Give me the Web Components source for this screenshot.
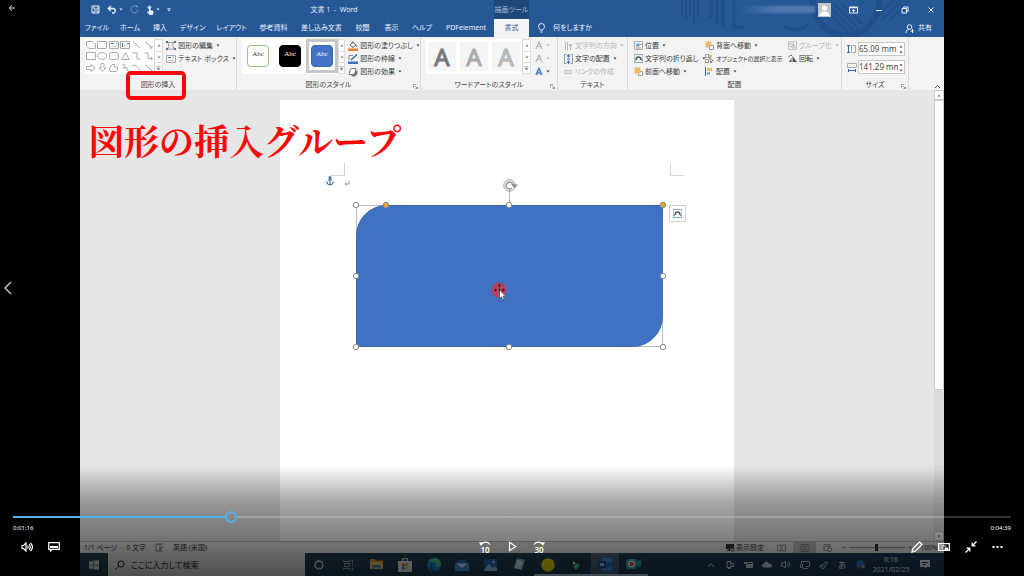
<!DOCTYPE html>
<html lang="ja">
<head>
<meta charset="utf-8">
<title>Video player</title>
<style>
html,body{margin:0;height:100%;background:#000}
body{font:7px/10px "Noto Sans","Noto Sans CJK JP",sans-serif;font-feature-settings:"palt";color:#333;overflow:hidden}
</style>
</head>
<body>
<video-player></video-player>
<script>
const RESET = `*{box-sizing:border-box}
button,input{font:inherit;color:inherit;font-feature-settings:inherit;background:none;border:0;padding:0;margin:0;outline:0}
button{display:inline-flex;align-items:center;justify-content:center;white-space:nowrap}
a{color:inherit;text-decoration:none}`;

function define(name, markup, css) {
  customElements.define(name, class extends HTMLElement {
    constructor() {
      super();
      this.attachShadow({ mode: 'open' }).innerHTML =
        `<style>${RESET}${css}</style>` + (typeof markup === 'function' ? markup(this) : markup);
    }
  });
}

/* Icons: name -> [width, height, drawing] */
const S = 'fill="none" stroke="currentColor"';
const ICONS = {
  back: [8, 8, `<path ${S} d="M7 4H1.2M4 1.3 1.2 4 4 6.7"/>`],
  save: [9, 9, `<path ${S} d="M1 1h7v7H1zM3 1v3h4V1M3 8V6h4v2"/>`],
  undo: [10, 9, `<path ${S} stroke-width="1.3" d="M4 1 1.2 3.5 4 6M1.5 3.5H6a2.2 2.2 0 0 1 0 4.5H5"/>`],
  redo: [9, 9, `<path ${S} opacity=".4" d="M6.5 1.5A3.5 3.5 0 1 0 8 4.500M6.500 0v2h2"/>`],
  touch: [8, 10, `<circle cx="3.500" cy="2.300" r="1.900" fill="currentColor" opacity=".75"/><path fill="currentColor" d="M3 2h1.400v3l3 1v2L6.500 10h-3L1 7l.600-.900L3 7z"/>`],
  caret: [4, 3, `<path fill="currentColor" d="M.5.500h3L2 2.500z"/>`],
  qat: [4, 4, `<path fill="currentColor" d="M.5 0h3v.800h-3zM.500 1.500h3L2 3.500z"/>`],
  avatar: [13, 14, `<path fill="#c4c4c4" d="M0 0h13v14H0z"/><circle cx="6.500" cy="5" r="2.600" fill="#fff"/><path fill="#fff" d="M1.500 13c0-6 10-6 10 0z"/>`],
  ribbonopt: [9, 8, `<path ${S} d="M.5 1h8v6h-8z"/><path fill="currentColor" d="M.5 1h8v1.300h-8zM4.500 3l2 2H5v1.500H4V5H2.500z"/>`],
  min: [8, 8, `<path ${S} d="M1 4.500h6"/>`],
  restore: [8, 8, `<path ${S} d="M1 2.500h4.500V7H1zM2.500 2.500V1H7v4.500H5.500"/>`],
  close: [8, 8, `<path ${S} d="m1.500 1.500 5 5m0-5-5 5"/>`],
  bulb: [9, 10, `<path ${S} d="M3.200 7c0-1-1.700-1.600-1.700-3.500a3 3 0 0 1 6 0C7.500 5.400 5.800 6 5.800 7zM3.300 9h2.400"/>`],
  share: [9, 9, `<circle ${S} cx="4.500" cy="3" r="2.300"/><path ${S} d="M1 9c0-2.600 1.200-3.600 3-3.700M7.500 5v4M5.500 7h3"/>`],
  snip: [10, 8, `<path ${S} d="M.5.500h6.500l2.500 2.500v4.500H3L.500 5z"/>`],
  box: [10, 8, `<path ${S} d="M.5.500h9v7h-9z"/>`],
  ellipse: [10, 8, `<ellipse ${S} cx="5" cy="4" rx="4.300" ry="3.300"/>`],
  rbox: [10, 8, `<rect ${S} x=".5" y=".5" width="9" height="7" rx="2"/>`],
  tbox: [10, 8, `<path ${S} color="#aaa" d="M.5.500h9v7h-9z"/><path stroke="#3b75b5" d="M2 2.500h3M7 2.500h1"/><path ${S} color="#aaa" opacity=".6" d="M2 5.500h6"/>`],
  vbox: [10, 8, `<path ${S} d="M.5.500h9v7h-9z"/><path stroke="#3b75b5" d="M2.500 2v4M7 2.500h2"/><path ${S} opacity=".6" d="M5 2v4"/>`],
  line: [9, 8, `<path ${S} d="m1 .5 7 6.500"/>`],
  arrowline: [9, 8, `<path ${S} d="m1 .5 7 6.500M8 4.500V7H5.500"/>`],
  tri: [9, 8, `<path ${S} d="M4.500.700 8.300 7.500H.700z"/>`],
  elbow: [9, 8, `<path ${S} d="M.5 1H5v6h3.500"/>`],
  elbow2: [9, 8, `<path ${S} d="M.5 1H4v5.500h4.500M7 5l1.500 1.500L7 8"/>`],
  rarrow: [10, 8, `<path ${S} d="M.5 2.500H5v-2L9 4 5 7.500v-2H.500z"/>`],
  darrow: [9, 9, `<path ${S} d="M3 .5h3v4.500h2L4.500 8.500 1 5h2z"/>`],
  free: [9, 9, `<path ${S} d="M3 1.500h3L5 4h3.500v3L7 8.500H1L.500 5z"/>`],
  scribble: [9, 9, `<path ${S} d="M2 3c0-3 3-2 2 0S1 5.500 3 5s4-1 3 0-1 1 0 1-.500 2 2 2.500"/>`],
  curve: [9, 8, `<path ${S} d="M.5 1.500c4-1 6.500 2 7.500 5.500"/>`],
  up: [4, 3, `<path fill="currentColor" d="M.5 2.500h3L2 .500z"/>`],
  more: [5, 5, `<path fill="currentColor" d="M.5.500h4v.800h-4zM.700 2.200h3.600L2.500 4.500z"/>`],
  edit: [10, 9, `<path ${S} color="#999" d="M2 1.500h6L6.500 4l2 4h-7l1.500-3z"/><path fill="#3b75b5" d="M0 0h2v2H0zM8 0h2v2H8zM0 7h2v2H0zM8 7h2v2H8z"/>`],
  fill: [10, 10, `<path ${S} color="#666" d="M2 4 5 1l3 3-3 2.500zM5 2.500V.500"/><path fill="#3b75b5" d="M8 3.500 9.500 6H8z"/><path fill="#ed7d31" d="M0 7.500h10V10H0z"/>`],
  outline: [10, 10, `<path ${S} color="#888" d="M1 6V1.500h4"/><path stroke="#2f6cb3" stroke-width="1.500" d="m3 6 6-5.500"/><path fill="#3a6fc4" d="M0 7.500h10V10H0z"/>`],
  effect: [10, 10, `<path fill="#777" d="m3 7.500 4-4.500 2.500 1v3L7 9.500H4z"/><path fill="#fff" stroke="#777" d="M3 1.500h5l-1 4-2 2H1L2 3z"/>`],
  launch: [5, 5, `<path ${S} stroke-width=".7" d="M.5 3.500v-3h3M2 2l2.500 2.500M4.500 2.500v2h-2"/>`],
  afill: [8, 9, `<path ${S} stroke-width="1.200" d="m1 8 3-7 3 7M2 5.500h4"/>`],
  aglow: [8, 9, `<path fill="none" stroke="#a9c9ec" stroke-width="3" d="m1.500 8 2.500-6 2.500 6"/><path fill="none" stroke="#2f6cb3" d="m1 8 3-6.500L7 8M2 6h4"/>`],
  dir: [9, 10, `<path ${S} d="M1.500 1v8M3.500 1v8M6.500 9V3L5 5M6.500 3 8 5"/>`],
  valign: [9, 10, `<path ${S} color="#999" d="M2.500.500h-2v9h2M6.500.500h2v9h-2"/><path fill="#2f6cb3" d="m4.500 0 2 2.500H5v1H4v-1H2.500zM4.500 10l2-2.500H5v-1H4v1H2.500zM3 4.500h3v1H3z"/>`],
  link: [8, 6, `<path ${S} d="M3.500 1.500h-2a1.500 1.500 0 0 0 0 3h2M4.500 1.500h2a1.500 1.500 0 0 1 0 3h-2M2.500 3h3"/>`],
  pos: [9, 9, `<path ${S} color="#aaa" d="M.5.500h8v8h-8z"/><path fill="#5b9bd5" d="M2.500 2.500h3v3h-3z"/><path stroke="#999" d="M6 3.500h2M2 7h5"/>`],
  wrap: [9, 9, `<path stroke="#7fb0dc" d="M0 .500h9M0 8.500h9M0 6.500h2M7 6.500h2"/><path ${S} color="#555" stroke-width="1.500" d="M2 6c0-4 5-4 5 0"/><path ${S} color="#999" stroke-width=".5" d="M.5 0v9M8.500 0v9"/>`],
  front: [9, 9, `<path fill="#fff" stroke="#999" d="M4.500 4.500h4v4h-4z"/><path fill="#efb866" d="M.500.500h6v6h-6z"/>`],
  behind: [9, 9, `<path fill="#efb866" d="M.5.500h6v6h-6z"/><path fill="#fff" stroke="#999" d="M4.500 4.500h4v4h-4z"/>`],
  select: [9, 9, `<path fill="#fff" stroke="#999" d="M.5.500h3v3h-3zM.500 5.500h3v3h-3z"/><path fill="#efb866" d="M4 1h3v2H4z"/><path fill="#fff" stroke="#666" stroke-width=".8" d="m4.500 3 4 4H6.500L6 9z"/>`],
  align: [8, 9, `<path stroke="#2f6cb3" d="M.5 0v9"/><path fill="#efb866" d="M2 1h5v3H2z"/><path fill="#5b9bd5" d="M2 5.500h3v2H2z"/>`],
  group: [9, 9, `<path ${S} stroke-width=".8" d="M.5.500h8v8h-8zM2 2h3.500v3.500H2zM4 4h3v3H4z"/>`],
  rotate: [9, 9, `<path fill="#555" d="M4.500 2v6H9zM3.500 4v4H1z"/><path fill="none" stroke="#2f6cb3" d="M1 3.500C1 1.500 2.500 1 4 1.500"/>`],
  hsize: [10, 10, `<path stroke="#2f6cb3" d="M1.500 1v8M0 1.500h3M0 8.500h3"/><path ${S} color="#aaa" d="M4.500 1.500h4v7h-4z"/>`],
  wsize: [10, 10, `<path stroke="#2f6cb3" d="M1 8.500h8M1.500 7v3M8.500 7v3"/><path ${S} color="#aaa" d="M.5 1.500h9v4h-9z"/>`],
  collapse: [7, 5, `<path ${S} d="m1 4 2.500-2.500L6 4"/>`],
  anchor: [8, 10, `<g fill="none" stroke="#41719c" stroke-width="1.200"><circle cx="4" cy="1.600" r="1"/><path d="M4 2.600V9M2 4h4M.700 5.500C1 8 2.500 8.800 4 9c1.500-.200 3-1 3.300-3.500"/></g>`],
  ret: [6, 5, `<path ${S} stroke-width=".8" d="M5 0v3H1M2.500 1.500 1 3l1.500 1.500"/>`],
  proof: [9, 9, `<path ${S} stroke-width=".8" color="#666" d="M1 1h4v7H1zM5 1h3M5 8h3"/><path ${S} color="#555" d="m4.500 5 1 1.500L8 3"/>`],
  display: [9, 9, `<path fill="currentColor" d="M0 1h8v4.500H4V8H1V7h1.500V6H0z"/><circle ${S} cx="6.500" cy="6.500" r="1.700"/>`],
  read: [9, 8, `<path ${S} stroke-width=".8" d="M.5 1h3.500v6H.500zM5 1h3.500v6H5z"/>`],
  print: [9, 8, `<path ${S} stroke-width=".8" d="M1 .500h7v7H1zM2.500 2.500h4M2.500 4h4M2.500 5.500h4"/>`],
  web: [9, 8, `<path ${S} stroke-width=".8" d="M1 .500h6v3M1 .500v6h3M2 2.500h4"/><circle ${S} cx="6.500" cy="5.500" r="2"/>`],
  win: [10, 10, `<path fill="#c9d3d6" d="m0 1.500 4.500-.700v4H0zM5 .700 10 0v4.800H5zM0 5.300h4.500v4L0 8.600zM5 5.300h5V10L5 9.300z"/>`],
  search: [10, 10, `<circle ${S} cx="6" cy="4" r="3"/><path ${S} d="M4 6.200.500 9.500"/>`],
  cortana: [10, 10, `<circle fill="none" stroke="#d6dadd" stroke-width="1.300" cx="5" cy="5" r="4"/>`],
  taskview: [12, 10, `<path fill="none" stroke="#a0a6aa" d="M2.500 3.500h5v3h-5zM1.500 0v1.500h7V0M1.500 10V8.500h7V10M10.500 0v3M10.500 4v2M10.500 7.500V10"/>`],
  folder: [13, 11, `<path fill="#d49a2a" d="M0 0h5l1 1.500h7V10H0z"/><path fill="#f5c453" d="M0 3h13v7H0z"/><path fill="#2f86d4" d="M2.500 6h8v5H9V8.500H4V11H2.500z"/>`],
  store: [14, 14, `<path fill="none" stroke="#e9e9e9" d="M4.500 3V.700h5V3"/><path fill="#e9e9e9" d="M0 3h14v11H0z"/><path fill="#e05030" d="M4 5.500h2.700v2.700H4z"/><path fill="#8cc63f" d="M7.300 5.500H10v2.700H7.300z"/><path fill="#2f9de0" d="M4 8.800h2.700v2.700H4z"/><path fill="#f5c040" d="M7.300 8.800H10v2.700H7.300z"/>`],
  edge: [14, 14, `<circle cx="7" cy="7" r="7" fill="#1f7fd0"/><path fill="#4cc88a" d="M1 4c3-6 13-5 13 2.500 0 3-5 3-5.500 1C9 3 3 3 1 4z"/><path fill="#124f96" d="M5 6c-2 4 2 8 7 5.500-2 2-4 2.500-5 2.500C2 13 2 8 5 6z"/>`],
  mail: [14, 12, `<path fill="#1c6fc0" d="m0 4 7-4 7 4v8H0z"/><path fill="#dfeefa" d="M1 4.500h12L7 9z"/><path fill="#37a0e8" d="m0 4.500 7 5 7-5V12H0z"/>`],
  photos: [13, 12, `<path fill="#2067b0" d="M0 0h13v12H0z"/><path fill="#8fc8f2" d="m0 11 5-6 4 4 2-2 2 3v2H0z"/><circle cx="9.500" cy="3" r="1.200" fill="#cfe8fb"/>`],
  notepad: [13, 13, `<path fill="#6fb4cb" d="m4 0 8 2-3 10-8-2z"/><path fill="#d6e6ea" d="m4 2 6 1.500-2.500 8L1.500 10z"/>`],
  yellow: [14, 14, `<circle cx="7" cy="7" r="6.700" fill="#e6dc00"/>`],
  filmora: [14, 14, `<rect width="14" height="14" rx="2" fill="#23363a"/><path fill="#e8f4f2" d="m4 3 3 2-3 2z"/><path fill="#44c9b0" d="m4 9 4-4 3 3-4 4z"/>`],
  word: [14, 13, `<path fill="#3d8be0" d="M4 0h10v13H4z"/><path fill="#2a66bd" d="M4 4.500h10V9H4z"/><path fill="#1a4a9c" d="M0 3h8v7H0z"/><path fill="none" stroke="#fff" stroke-width=".8" d="m2 5 .8 3L4 5.500 5.200 8 6 5"/>`],
  camera: [15, 12, `<path fill="#2fa6b5" d="M0 2 2 0h8l1 2 4-1v7l-4-1-1 3H0z"/><circle cx="5.500" cy="5" r="3.500" fill="#fff"/><circle cx="5.500" cy="5" r="2.200" fill="#e04040"/>`],
  chev: [8, 6, `<path ${S} d="m1 5 3-3.500L7 5"/>`],
  meet: [8, 9, `<path ${S} d="M1 1.500h4v6H1zM5 3.500h2.500v3H5M2 8.500h3"/>`],
  battery: [10, 8, `<path ${S} d="M2.500 1.500h6v5h-6z"/><path fill="currentColor" d="M3 3h5v3H3zM0 1h3v2H0z"/>`],
  cloud: [10, 7, `<path fill="currentColor" d="M2 6.500a2 2 0 0 1 0-4C3 0 6 0 7 2.500c3-.500 4 3.500 1.500 4z"/>`],
  vol: [10, 9, `<path ${S} d="M.5 3h2l2-2v7l-2-2h-2zM6 3c.800 1 .800 2 0 3M7.500 1.500c2 2 2 4 0 6"/>`],
  net: [10, 9, `<path ${S} d="M1.500 4V1.500h8v5H6M3 8.500h5M.500 4.500h2v3h-2z"/>`],
  pen: [9, 9, `<path ${S} d="M1 8 7 1.500 8.500 3 4 7.500c-2 2 1 1.500 3-1M1.500 7.500C-.5 5 3 4.500 4 5.500"/>`],
  ball: [9, 9, `<circle cx="4.500" cy="4.500" r="4.200" fill="#2a74c8"/><circle cx="7" cy="6.500" r="1.700" fill="#e98a50"/>`],
  note: [10, 9, `<path fill="currentColor" d="M0 0h10v7H7L5 9V7H0z"/><path stroke="#2a3c46" d="M2 2.500h6M2 4.500h4"/>`],
  speaker: [12, 10, `<path ${S} stroke-width="1.200" d="M1 3.500h1.500L5 1v8L2.500 6.500H1zM6.500 3.500c.800 1 .800 2 0 3M8 2.200c1.700 1.700 1.700 4 0 5.600M9.500 1c2.500 2.500 2.500 5.500 0 8"/>`],
  sub: [12, 10, `<path ${S} stroke-width="1.200" d="M.7.700h10.600v6.600H4L2.500 9V7.300H.700z"/><path fill="currentColor" d="M2 4h8v2H2z"/>`],
  play: [9, 11, `<path ${S} stroke-width="1.200" d="M1.500 1.300 7.800 5.500 1.500 9.700z"/>`],
  pencil: [12, 12, `<path ${S} stroke-width="1.300" d="m1 11 1-3.500L8.500 1 11 3.500 4.500 10z"/>`],
  cc: [12, 8, `<path ${S} stroke-width="1.300" d="M.7.700h10.600v6.600H.700z"/><path ${S} d="M2.500 3h6M2.500 5h2.500"/><path fill="currentColor" d="M6.500 4.500H10v2.500H6.500z"/>`],
  shrink: [12, 12, `<path ${S} stroke-width="1.200" d="m11.500.500-4 4M7.200 1.500v3.300h3.300M.500 11.500l4-4M4.800 10.500V7.200H1.500"/>`],
  dots: [11, 4, `<path fill="currentColor" d="M.5 1h2v2h-2zM4.500 1h2v2h-2zM8.500 1h2v2h-2z"/>`],
  arc10: [12, 5, `<path ${S} stroke-width="1.300" d="M2 3.500c1.500-3 7-3.500 9 0"/><path fill="currentColor" d="M0 1 4.500 2 2 5z"/>`],
  arc30: [12, 5, `<path ${S} stroke-width="1.300" d="M1 3.500c2-3.500 7.500-3 9 0"/><path fill="currentColor" d="M12 1 7.500 2 10 5z"/>`]
};
define('ui-icon', el => {
  const [w, h, d] = ICONS[el.getAttribute('name')];
  return `<svg width="${w}" height="${h}" viewBox="0 0 ${w} ${h}" aria-hidden="true">${d}</svg>`;
}, `:host{display:inline-flex;flex:none;justify-content:center;align-items:center}svg{display:block}`);
const ic = n => `<ui-icon name="${n}"></ui-icon>`;

/* Title bar */
define('word-titlebar', `
<div class="left"><nav>
  <button aria-label="上書き保存">${ic('save')}</button>
  <button aria-label="元に戻す">${ic('undo')}${ic('caret')}</button>
  <button aria-label="やり直し">${ic('redo')}</button>
  <button aria-label="タッチ">${ic('touch')}${ic('caret')}</button>
  <button aria-label="カスタマイズ">${ic('qat')}</button></nav>
  <span class="title">文書 1  -  Word</span></div>
<span class="context">描画ツール</span>
<div class="right"><i class="name"></i>${ic('avatar')}
  <div class="win"><button aria-label="リボンの表示オプション">${ic('ribbonopt')}</button><button aria-label="最小化">${ic('min')}</button><button aria-label="元のサイズ">${ic('restore')}</button><button aria-label="閉じる">${ic('close')}</button></div>
</div>`, `
:host{display:grid;grid-template-columns:414px 35px 1fr;height:19px;color:#e6edf6}
.left,.right{display:flex;align-items:center}
nav{display:flex;width:94px;padding-left:11px;gap:7px}
nav button{gap:2px}
.title{flex:1;text-align:center;white-space:pre}
.context{background:#1e4878;color:#a9bcd6;display:grid;place-items:center;white-space:nowrap}
.right{justify-content:flex-end}
.name{width:76px;height:7px;margin-right:3px;background:linear-gradient(90deg,#5279ae00,#5279ae 50%);filter:blur(1px)}
.win{display:flex;margin-left:9px}.win button{width:26px;height:18px}`);

/* Tab strip */
const TABS = ['ファイル', 'ホーム', '挿入', 'デザイン', 'レイアウト', '参考資料', '差し込み文書', '校閲', '表示', 'ヘルプ', 'PDFelement', '書式'];
define('word-tabs', `
<div class="tabs">${TABS.map(t => `<button${t === '書式' ? ' class="on"' : ''}>${t}</button>`).join('')}</div>
<button class="tell">${ic('bulb')}何をしますか</button>
<button class="share">${ic('share')}共有</button>`, `
:host{display:flex;height:18px;color:#eef3f9}
.tabs{display:grid;grid-template-columns:34px 32px 28px 37px 41px 43px 53px 29px 29px 32px 56px 35px}
.on{background:#f3f3f3;color:#2b579a}
.tell{margin-left:8px;gap:7px}
.share{margin-left:auto;margin-right:12px;gap:4px}`);

/* Ribbon parts */
define('ribbon-item', el => `<button${el.hasAttribute('off') ? ' disabled' : ''}>${ic(el.getAttribute('icon'))}<slot></slot>${el.hasAttribute('menu') ? ic('caret') : ''}</button>`, `
:host{display:flex;height:13px;color:#3a3a3a}
:host([off]){color:#b4b4b4}
:host([long]){font-size:6px}
button{gap:3px}ui-icon:first-child{width:10px;margin-right:-1px}`);
define('gallery-scroll', `<button aria-label="上へ">${ic('up')}</button><button aria-label="下へ">${ic('caret')}</button><button aria-label="その他">${ic('more')}</button>`, `
:host{display:grid;grid-template-rows:repeat(3,1fr);width:9px;color:#777;background:#fff;border:1px solid #ddd}
button+button{border-top:1px solid #ddd}`);
define('ribbon-group', el => `<div class="body"><slot></slot></div><footer>${el.getAttribute('label')}</footer>${el.hasAttribute('launcher') ? `<button aria-label="詳細">${ic('launch')}</button>` : ''}`, `
:host{display:flex;flex-direction:column;position:relative;padding:2px 0 0 5px;border-right:1px solid #d8d8d8;color:#444}
.body{display:flex;height:41px}
footer{text-align:center;height:10px;line-height:10px;margin-left:-5px}
button{position:absolute;right:2px;bottom:1px;color:#777}`);
define('size-field', el => `<label>${ic(el.getAttribute('icon'))}<span class="f"><input aria-label="${el.getAttribute('label')}" value="${el.getAttribute('value')}"><span class="s">${ic('up')}${ic('caret')}</span></span></label>`, `
:host{display:block}
label{display:flex;align-items:center;gap:1px}
.f{display:flex;width:47px;height:14px;background:#fff;border:1px solid #c6c6c6}
input{flex:1;min-width:0;font-size:8px;color:#444}
.s{display:flex;flex-direction:column;justify-content:space-around;width:6px}`);

const SHAPES = ['snip','box','tbox','vbox','line','arrowline','box','ellipse','rbox','tri','elbow','elbow2','rarrow','darrow','free','scribble','curve','line'];
define('word-ribbon', `
<ribbon-group label="図形の挿入">
  <div class="gal shapes">${SHAPES.map(ic).join('')}</div><gallery-scroll></gallery-scroll>
  <div class="col"><ribbon-item icon="edit" menu>図形の編集</ribbon-item><ribbon-item icon="tbox" menu>テキスト ボックス</ribbon-item></div>
</ribbon-group>
<ribbon-group label="図形のスタイル" launcher>
  <div class="gal"><button class="st"><b>Abc</b></button><button class="st k"><b>Abc</b></button><button class="st bl"><b>Abc</b></button></div><gallery-scroll></gallery-scroll>
  <div class="col"><ribbon-item icon="fill" menu>図形の塗りつぶし</ribbon-item><ribbon-item icon="outline" menu>図形の枠線</ribbon-item><ribbon-item icon="effect" menu>図形の効果</ribbon-item></div>
</ribbon-group>
<ribbon-group label="ワードアートのスタイル" launcher>
  <div class="gal"><button class="wa">A</button><button class="wa w2">A</button><button class="wa w3">A</button></div><gallery-scroll></gallery-scroll>
  <div class="col"><ribbon-item icon="afill" off menu></ribbon-item><ribbon-item icon="afill" off menu></ribbon-item><ribbon-item icon="aglow" menu></ribbon-item></div>
</ribbon-group>
<ribbon-group label="テキスト">
  <div class="col"><ribbon-item icon="dir" off menu>文字列の方向</ribbon-item><ribbon-item icon="valign" menu>文字の配置</ribbon-item><ribbon-item icon="link" off>リンクの作成</ribbon-item></div>
</ribbon-group>
<ribbon-group label="配置">
  <div class="col a"><ribbon-item icon="pos" menu>位置</ribbon-item><ribbon-item icon="wrap" menu>文字列の折り返し</ribbon-item><ribbon-item icon="front" menu>前面へ移動</ribbon-item></div>
  <div class="col b"><ribbon-item icon="behind" menu>背面へ移動</ribbon-item><ribbon-item icon="select" long>オブジェクトの選択と表示</ribbon-item><ribbon-item icon="align" menu>配置</ribbon-item></div>
  <div class="col"><ribbon-item icon="group" off menu>グループ化</ribbon-item><ribbon-item icon="rotate" menu>回転</ribbon-item></div>
</ribbon-group>
<ribbon-group label="サイズ" launcher>
  <div class="sizes"><size-field icon="hsize" label="高さ" value="65.09 mm"></size-field><size-field icon="wsize" label="幅" value="141.29 mm"></size-field></div>
</ribbon-group>
<button class="fold" aria-label="リボンを折りたたむ">${ic('collapse')}</button>`, `
:host{display:grid;grid-template-columns:157px 184px 137px 70px 214px 67px 1fr;height:53px;background:#f3f3f3;overflow:hidden}
.gal{display:flex;background:#fff;height:35px}
gallery-scroll{height:35px}
.shapes{display:grid;grid-template-columns:repeat(6,1fr);width:70px;place-items:center;color:#aaa}
gallery-scroll + .col{padding-left:3px}
.col.a{width:71px}.col.b{width:83px}
.st{width:32px;height:34px;border:3px solid transparent}
b{display:grid;place-items:center;width:22px;height:22px;border:1px solid #92c47a;border-radius:4px;font:7px "Liberation Serif",serif;padding-bottom:4px;color:#333}
.k b{background:#000;border-color:#000;color:#fff}
.bl{border-color:#c6c6c6}.bl b{background:#4472c4;border-color:#3a66b0;color:#fff}
.wa{width:28px;height:29px;margin:3px 2px;background:#f5f5f8;font:24px "Noto Sans",sans-serif;color:#777;-webkit-text-stroke:1px #777}
.w2{color:#aaa;-webkit-text-stroke:1px #aaa}.w3{color:#ccc;-webkit-text-stroke:1px #aaa}
.sizes{display:flex;flex-direction:column;gap:4px;padding-top:3px}
.fold{justify-self:end;align-self:end;width:14px;height:8px;color:#555}`);

/* Document page with the selected drawing */
const knob = (x, y, c = '#fff') => `<circle cx="${x}" cy="${y}" r="2.700" fill="${c}" stroke="#8a8a8a"/>`;
define('doc-canvas', `
<main><article>
<svg width="454" height="260" viewBox="0 0 454 260" aria-label="図形">
  <path fill="none" stroke="#d4d4d4" d="M64.500 63v12.500H51M390.500 63v12.500H404"/>
  <path fill="none" stroke="#bbb" d="M76.500 105.500h306v141h-306zM229.500 90v15"/>
  <path fill="#4172c1" stroke="#3c69b0" d="M106.500 105.500h276v111a30 30 0 0 1-30 30h-276v-111a30 30 0 0 1 30-30z"/>
  ${knob(76, 105)}${knob(229, 105)}${knob(76, 176)}${knob(383, 176)}${knob(76, 247)}${knob(229, 247)}${knob(383, 247)}${knob(106, 105, '#f0a030')}${knob(383, 105, '#f0a030')}
  <g fill="none" stroke="#999"><circle cx="229.500" cy="85.500" r="5.700"/><path stroke-width="1.500" d="M232 88a3.500 3.500 0 1 1 1-3"/><path fill="#888" stroke="none" d="M231 84.500h7l-3.500 3.500z"/></g>
  <circle cx="219" cy="190" r="7.500" fill="#b8415f"/>
  <path stroke="#2c2c40" stroke-dasharray="2 1" d="M219.500 185.500v9M215 190h9"/>
  <path fill="#1a1a2a" d="m219.500 184 1.500 2h-3zM214 190l2-1.500v3zM225 190l-2-1.500v3z"/>
  <path fill="#fff" stroke="#333" stroke-width=".6" d="M219.500 190v8.500l2-1.700 1.300 3 1.500-.6-1.300-3h2.700z"/>
</svg>
<ui-icon class="anchor" name="anchor"></ui-icon><ui-icon class="ret" name="ret"></ui-icon>
<button aria-label="レイアウト オプション">${ic('wrap')}</button>
</article></main>
<aside><button aria-label="上へスクロール">${ic('up')}</button><i></i><button aria-label="下へスクロール">${ic('caret')}</button></aside>`, `
:host{display:flex;flex:1;min-height:0;background:#e6e6e6}
main{flex:1;display:flex;justify-content:center;padding-top:10px}
article{position:relative;width:min(454px,90%);background:#fff}
svg{display:block}
.anchor,.ret,article button{position:absolute}
.anchor{left:46px;top:76px}.ret{left:64px;top:81px;color:#888}
article button{left:389px;top:105px;width:17px;height:17px;border:1px solid #d0d0d0;background:#fff}
aside{width:10px;display:flex;flex-direction:column;background:#dcdcdc;color:#666}
aside button{height:10px;background:#fff;border:1px solid #ccc}
aside i{height:290px;background:#fff;border:1px solid #ccc}
aside button:last-child{margin-top:auto}`);

/* Status bar */
define('word-status', `
<span>1/1 ページ</span><span>0 文字</span>${ic('proof')}<span>英語 (米国)</span>
<div class="r"><button class="disp">${ic('display')}表示設定</button>
<button class="v" aria-label="閲覧モード">${ic('read')}</button><button class="v on" aria-label="印刷レイアウト">${ic('print')}</button><button class="v" aria-label="Web レイアウト">${ic('web')}</button>
<span class="zoom">−<input type="range" aria-label="ズーム" value="50">+</span><span class="pct">100%</span></div>`, `
:host{display:flex;align-items:center;gap:9px;height:12px;padding:0 4px;background:#e8e8e8;color:#333;white-space:nowrap;border-top:1px solid #bbb}
.r{margin-left:auto;display:flex;align-items:center}
.disp{gap:1px;margin-right:6px}
.v{width:23px;height:11px;color:#777}.on{background:#bdbdbd}
.zoom{display:flex;align-items:center;gap:3px;margin-left:3px}
input{appearance:none;width:56px;height:9px;background:linear-gradient(#888,#888) center/100% 1px no-repeat}
input::-webkit-slider-thumb{appearance:none;width:3px;height:7px;background:#333}
.pct{margin-left:8px;width:20px}`);

/* Windows taskbar */
const APPS = ['cortana','taskview','folder','store','edge','mail','photos','notepad','yellow','filmora','word','camera'];
const TRAY = ['chev','meet','battery','cloud','vol','net','pen','','ball'];
define('task-bar', `
<button class="start" aria-label="スタート">${ic('win')}</button>
<label>${ic('search')}<span>ここに入力して検索</span></label>
<nav>${APPS.map((a, i) => `<button aria-label="${a}" class="${i > 7 ? 'run' : ''} ${a === 'word' ? 'on' : ''}">${ic(a)}</button>`).join('')}</nav>
<div class="tray">${TRAY.map(t => t ? `<i>${ic(t)}</i>` : '<i class="ime">あ</i>').join('')}</div>
<time><span>6:16</span><span>2021/02/25</span></time><button class="note" aria-label="通知">${ic('note')}</button>`, `
:host{display:flex;height:23px;background:linear-gradient(90deg,#22404b,#20385a)}
.start{width:28px}
label{width:197px;background:#e2e2e2;display:flex;align-items:center;gap:6px;padding-left:7px;color:#222;font-size:8px}
nav{display:flex;width:343px}nav button{flex:1;border:solid transparent;border-width:2px 0}
.run{border-bottom-color:#b4d6f2}.on{background:#4b6078}
.tray{display:flex;width:168px;margin-left:auto;color:#cdd5dc}
i{flex:1;display:grid;place-items:center;font-style:normal}.ime{font-size:8px;color:#fff}
time{width:42px;display:flex;flex-direction:column;justify-content:center;text-align:center;color:#e8eef4}
.note{width:32px;color:#e8eef4;padding-right:6px}`);

/* Whole recorded window */
define('word-window', `<header><svg class="art" width="230" height="37" viewBox="0 0 230 37" aria-hidden="true"><g fill="none" stroke="#214f8b" stroke-width="3">
<path stroke-width="2" d="M2 0v14M6 0v20M10 0v15M14 0v24M18 0v18"/><path stroke-width="4" d="M31 0v18M37 0v24M43 0v27"/><path d="M54 0v27h10"/>
<path d="M104 26c10 6 20 4 24-2"/><circle cx="166" cy="2" r="33" stroke-width="6"/><path stroke-width="2" d="m140 4 28 28M147 4l26 26M154 4l24 24M162 4l20 20"/><path stroke-width="2" d="m210 20 20-20M202 20l20-20M194 20 214 0"/></g></svg>
<word-titlebar></word-titlebar><word-tabs></word-tabs></header>
<word-ribbon></word-ribbon><doc-canvas></doc-canvas><word-status></word-status><task-bar></task-bar>`, `
:host{display:flex;flex-direction:column;min-width:0}
header{position:relative;background:#265898}
.art{position:absolute;right:34px;top:0}
word-titlebar,word-tabs{position:relative}`);

/* Transport controls */
define('player-controls', `
<input type="range" min="0" max="1000" value="215" aria-label="シーク">
<div class="times"><span>0:01:16</span><span>0:04:39</span></div>
<div class="bar">
 <div><button aria-label="音量">${ic('speaker')}</button><button aria-label="字幕">${ic('sub')}</button></div>
 <div><button class="skip">${ic('arc10')}<span>10</span></button><button aria-label="再生">${ic('play')}</button><button class="skip">${ic('arc30')}<span>30</span></button></div>
 <div class="end"><button aria-label="編集">${ic('pencil')}</button><button aria-label="ミニ表示">${ic('cc')}</button><button aria-label="全画面表示の終了">${ic('shrink')}</button><button aria-label="その他">${ic('dots')}</button></div>
</div>`, `
:host{display:block;padding:46px 13px 16px;color:#fff;background:linear-gradient(#0000,#00000059 34%,#000000a6)}
input{--at:21.8%;display:block;appearance:none;width:100%;height:12px;
 background:linear-gradient(90deg,#4fb3e6 calc(var(--at) - 5px),#0000 0,#0000 calc(var(--at) + 5px),#ffffff33 0) center/100% 2px no-repeat}
input::-webkit-slider-thumb{appearance:none;width:12px;height:12px;border:2px solid #4fb3e6;border-radius:50%;background:none}
.times{display:flex;justify-content:space-between;font-size:6px;line-height:10px}
.bar{display:grid;grid-template-columns:1fr auto 1fr;height:27px}
.bar div{display:flex}.end{justify-content:flex-end}
button{width:27px;height:27px}
.skip{flex-direction:column;font-size:8px;line-height:7px;font-weight:600}`);

define('video-player', `
<button class="back" aria-label="戻る">${ic('back')}</button>
<word-window></word-window>
<div class="mark"></div><h1>図形の挿入グループ</h1>
<button class="prev" aria-label="前へ"><svg width="8" height="14" viewBox="0 0 8 14"><path d="M7 1 1 7l6 6" fill="none" stroke="#ddd" stroke-width="1.200"/></svg></button>
<player-controls></player-controls>`, `
:host{display:grid;grid-template-columns:80px minmax(0,1fr) 80px;position:relative;height:100vh;background:#000;color:#333}
word-window{grid-column:2}
.back,.prev,.mark,h1,player-controls{position:absolute}
.back{left:8px;top:4px;color:#ddd}
.prev{left:4px;top:281px}
.mark{left:126px;top:71px;width:60px;height:29px;border:4px solid #f80808;border-radius:5px}
h1{left:89px;top:120px;margin:0;font:700 35px/40px "Noto Serif CJK JP","Noto Sans CJK JP",serif;color:#f80808;font-feature-settings:normal;white-space:nowrap}
player-controls{left:0;right:0;bottom:0}`);
</script>
</body>
</html>
